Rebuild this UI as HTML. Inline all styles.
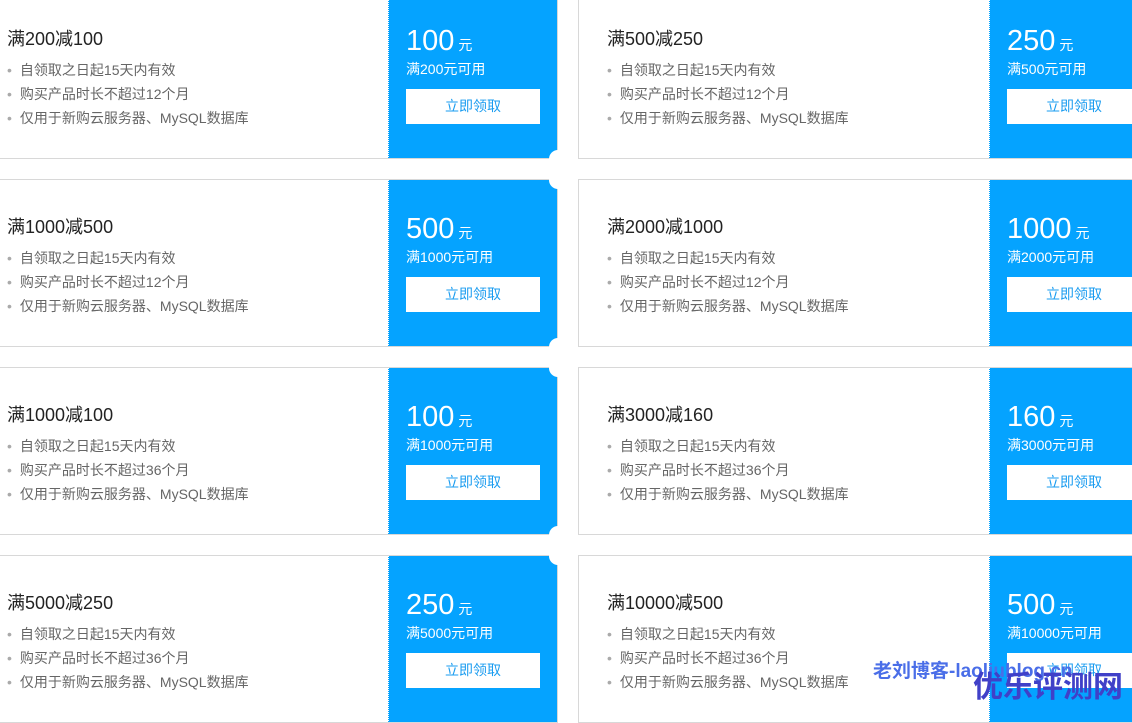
<!DOCTYPE html><html><head><meta charset="utf-8"><style>
*{margin:0;padding:0;box-sizing:border-box}
body{width:1132px;height:706px;overflow:hidden;background:#fff;position:relative;font-family:"Liberation Sans","Noto Sans CJK SC",sans-serif}
.card{position:absolute;width:580px;height:168px;border:1px solid #d8d8d8;background:#fff;overflow:hidden}
.t{position:absolute;left:28px;top:33px;font-size:18px;color:#222}
.l{position:absolute;left:28px;top:66px;font-size:14px;color:#666;line-height:24px;list-style:none}
.l li:before{content:"•";color:#aaa;margin-right:8px}
.b{position:absolute;left:409px;top:-1px;width:169px;height:170px;background:#05a3ff;border-left:1px dotted #fff}
.n{position:absolute;left:17px;top:34px;color:#fff;font-size:29px}
.n span{font-size:14px;margin-left:4px}
.s{position:absolute;left:17px;top:68px;color:#fff;font-size:14px}
.btn{position:absolute;left:17px;top:98px;width:134px;height:35px;background:#fff;color:#1a9cf0;font-size:14px;text-align:center;line-height:35px}
.dot{position:absolute;width:18px;height:18px;border-radius:50%;background:#fff}
.wm{position:absolute;font-weight:bold}
</style></head><body>
<div class="card" style="left:-22px;top:-9px"><div class="t">满200减100</div><ul class="l"><li>自领取之日起15天内有效</li><li>购买产品时长不超过12个月</li><li>仅用于新购云服务器、MySQL数据库</li></ul><div class="b"><div class="n">100<span>元</span></div><div class="s">满200元可用</div><div class="btn">立即领取</div></div></div>
<div class="card" style="left:578px;top:-9px"><div class="t">满500减250</div><ul class="l"><li>自领取之日起15天内有效</li><li>购买产品时长不超过12个月</li><li>仅用于新购云服务器、MySQL数据库</li></ul><div class="b" style="left:410px"><div class="n">250<span>元</span></div><div class="s">满500元可用</div><div class="btn">立即领取</div></div></div>
<div class="card" style="left:-22px;top:179px"><div class="t">满1000减500</div><ul class="l"><li>自领取之日起15天内有效</li><li>购买产品时长不超过12个月</li><li>仅用于新购云服务器、MySQL数据库</li></ul><div class="b"><div class="n">500<span>元</span></div><div class="s">满1000元可用</div><div class="btn">立即领取</div></div></div>
<div class="card" style="left:578px;top:179px"><div class="t">满2000减1000</div><ul class="l"><li>自领取之日起15天内有效</li><li>购买产品时长不超过12个月</li><li>仅用于新购云服务器、MySQL数据库</li></ul><div class="b" style="left:410px"><div class="n">1000<span>元</span></div><div class="s">满2000元可用</div><div class="btn">立即领取</div></div></div>
<div class="card" style="left:-22px;top:367px"><div class="t">满1000减100</div><ul class="l"><li>自领取之日起15天内有效</li><li>购买产品时长不超过36个月</li><li>仅用于新购云服务器、MySQL数据库</li></ul><div class="b"><div class="n">100<span>元</span></div><div class="s">满1000元可用</div><div class="btn">立即领取</div></div></div>
<div class="card" style="left:578px;top:367px"><div class="t">满3000减160</div><ul class="l"><li>自领取之日起15天内有效</li><li>购买产品时长不超过36个月</li><li>仅用于新购云服务器、MySQL数据库</li></ul><div class="b" style="left:410px"><div class="n">160<span>元</span></div><div class="s">满3000元可用</div><div class="btn">立即领取</div></div></div>
<div class="card" style="left:-22px;top:555px"><div class="t">满5000减250</div><ul class="l"><li>自领取之日起15天内有效</li><li>购买产品时长不超过36个月</li><li>仅用于新购云服务器、MySQL数据库</li></ul><div class="b"><div class="n">250<span>元</span></div><div class="s">满5000元可用</div><div class="btn">立即领取</div></div></div>
<div class="card" style="left:578px;top:555px"><div class="t">满10000减500</div><ul class="l"><li>自领取之日起15天内有效</li><li>购买产品时长不超过36个月</li><li>仅用于新购云服务器、MySQL数据库</li></ul><div class="b" style="left:410px"><div class="n">500<span>元</span></div><div class="s">满10000元可用</div><div class="btn">立即领取</div></div></div>
<div class="dot" style="left:549px;top:150px"></div><div class="dot" style="left:549px;top:171px"></div>
<div class="dot" style="left:549px;top:338px"></div><div class="dot" style="left:549px;top:359px"></div>
<div class="dot" style="left:549px;top:526px"></div><div class="dot" style="left:549px;top:547px"></div>
<div class="wm" style="left:873px;top:656px;font-size:19px;color:#4a6ee8">老刘博客-laoliublog.cn</div>
<div class="wm" style="left:973px;top:662px;font-size:30px;color:#4040c8">优乐评测网</div>
</body></html>
